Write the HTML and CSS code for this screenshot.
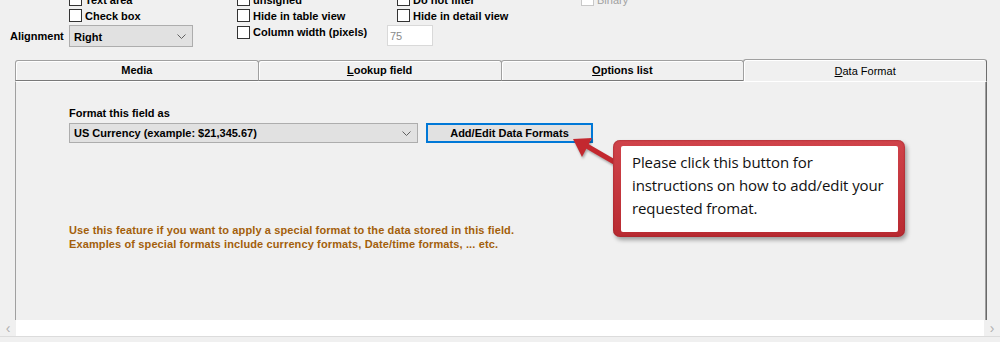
FILE: index.html
```html
<!DOCTYPE html>
<html lang="en">
<head>
    <meta charset="UTF-8">
    <title>Field properties - Data Format</title>
    <link rel="stylesheet" href="styles.css">
</head>
<body>
<div class="screen">

    <div class="props">
        <div></div>
        <label class="check"><span class="cb"></span>Text area</label>
        <label class="check"><span class="cb"></span>unsigned</label>
        <label class="check indent"><span class="cb"></span>Do not filter</label>
        <label class="check disabled"><span class="cb"></span>Binary</label>

        <div></div>
        <label class="check"><span class="cb"></span>Check box</label>
        <label class="check"><span class="cb"></span>Hide in table view</label>
        <label class="check indent"><span class="cb"></span>Hide in detail view</label>
        <div></div>

        <div class="prop-label">Alignment</div>
        <div class="select align-select">Right
            <svg class="chev" width="9" height="5" viewBox="0 0 9 5"><path d="M0.5 0.5 L4.5 4.5 L8.5 0.5" fill="none" stroke="#606060"/></svg>
        </div>
        <label class="check row3"><span class="cb"></span>Column width (pixels)</label>
        <div class="num-input">75</div>
        <div></div>
    </div>

    <div class="tabs">
        <div class="tab">Media</div>
        <div class="tab"><u>L</u>ookup field</div>
        <div class="tab"><u>O</u>ptions list</div>
        <div class="tab active"><u>D</u>ata Format</div>
    </div>

    <div class="panel">
        <div class="field-label">Format this field as</div>
        <div class="field-row">
            <div class="select format-select">US Currency (example: $21,345.67)
                <svg class="chev" width="9" height="5" viewBox="0 0 9 5"><path d="M0.5 0.5 L4.5 4.5 L8.5 0.5" fill="none" stroke="#606060"/></svg>
            </div>
            <button class="btn focused">Add/Edit Data Formats</button>
        </div>
        <p class="hint">
            Use this feature if you want to apply a special format to the data stored in this field.<br>
            Examples of special formats include currency formats, Date/time formats, ... etc.
        </p>

        <!-- annotation drawn over the dialog -->
        <svg class="arrow" width="64" height="46" viewBox="0 0 64 46">
            <path d="M58 35 L20 13" stroke="#c3282f" stroke-width="5" fill="none"/>
            <path d="M8 7 L27 6 L17 25 Z" fill="#c3282f"/>
        </svg>
        <div class="callout">
            <div class="callout-body">Please click this button for<br>instructions on how to add/edit your<br>requested fromat.</div>
        </div>
    </div>

    <div class="hscroll">
        <span class="arr">&#8249;</span>
        <div class="track"></div>
        <span class="arr">&#8250;</span>
    </div>
</div>
</body>
</html>
```

FILE: styles.css
```css
body {
    margin: 0;
    background: #f0f0f0;
    font-family: "Liberation Sans", Arial, sans-serif;
    font-size: 11px;
    color: #000;
}

.screen {
    width: 1000px;
    height: 342px;
    overflow: hidden;
}

/* top property checkboxes */
.props {
    display: grid;
    grid-template-columns: 59px 168px 150px 194px 1fr;
    grid-template-rows: 15px 17px 22px;
    margin: -8px 0 0 10px;
    font-weight: bold;
}

.check {
    display: flex;
    align-items: center;
    white-space: nowrap;
}

.check.indent {
    padding-left: 10px;
}

.check.row3 {
    align-self: start;
    height: 16px;
    margin-top: 0;
}

.cb {
    width: 11px;
    height: 11px;
    border: 1px solid #333;
    background: #fff;
    margin-right: 3px;
    flex: none;
}

.check.disabled {
    color: #a0a0a0;
    font-weight: normal;
}

.check.disabled .cb {
    border-color: #c8c8c8;
}

.prop-label {
    align-self: center;
    padding-top: 1px;
}

.select {
    position: relative;
    box-sizing: border-box;
    background: #e1e1e1;
    border: 1px solid #adadad;
    font-weight: bold;
    padding-left: 4px;
    display: flex;
    align-items: center;
    white-space: nowrap;
}

.chev {
    position: absolute;
    right: 6px;
    top: 50%;
    margin-top: -2px;
}

.align-select {
    width: 124px;
    height: 22px;
    margin-top: 1px;
    padding-top: 2px;
}

.num-input {
    box-sizing: border-box;
    width: 46px;
    height: 21px;
    margin-top: 1px;
    background: #fff;
    border: 1px solid #d9d9d9;
    color: #8a8a8a;
    font-weight: normal;
    padding: 4px 0 0 2px;
}

/* tab strip */
.tabs {
    display: flex;
    margin: 14px 13px 0 15px;
    height: 21px;
}

.tab {
    flex: 1;
    box-sizing: border-box;
    height: 21px;
    border: 1px solid #a0a0a0;
    border-bottom-color: #7a7a7a;
    border-radius: 3px 3px 0 0;
    box-shadow: inset 1px 1px 0 #fff;
    text-align: center;
    font-weight: bold;
    line-height: 19px;
}

.tab + .tab {
    margin-left: -1px;
}

.tab.active {
    position: relative;
    z-index: 1;
    height: 22px;
    margin-top: -1px;
    border-bottom: none;
    border-right-color: #6e6e6e;
    background: #f0f0f0;
    font-weight: normal;
    line-height: 22px;
}

/* tab page */
.panel {
    position: relative;
    box-sizing: border-box;
    height: 239px;
    margin: 0 13px 0 15px;
    border-top: 1px solid #fff;
    border-left: 1px solid #a0a0a0;
    border-right: 1px solid #696969;
    box-shadow: inset -1px 0 0 #a0a0a0;
    padding: 24px 0 0 53px;
}

.field-label {
    font-weight: bold;
    line-height: 14px;
}

.field-row {
    display: flex;
    margin-top: 3px;
}

.format-select {
    width: 349px;
    height: 20px;
}

.btn {
    box-sizing: border-box;
    width: 167px;
    height: 20px;
    margin-left: 8px;
    background: #e1e1e1;
    border: 1px solid #adadad;
    font-family: inherit;
    font-size: 11px;
    font-weight: bold;
    color: #000;
    padding: 0;
}

.btn.focused {
    border: 2px solid #0078d7;
}

.hint {
    margin: 80px 0 0;
    color: #a35f0b;
    font-weight: bold;
    line-height: 14px;
    letter-spacing: 0.12px;
}

.arrow {
    position: absolute;
    left: 549px;
    top: 50px;
    filter: drop-shadow(1px 2px 1px rgba(0, 0, 0, 0.3));
}

.callout {
    position: absolute;
    left: 597px;
    top: 58px;
    width: 292px;
    box-sizing: border-box;
    padding: 6px 7px 5px 8px;
    border-radius: 7px;
    background: linear-gradient(#d0434a, #b82a31);
    box-shadow: 2px 3px 4px rgba(0, 0, 0, 0.35), inset 0 0 2px #8e1c22;
}

.callout-body {
    background: #fff;
    border-radius: 2px;
    height: 86px;
    box-sizing: border-box;
    padding: 5px 4px 0 11px;
    font-family: "Open Sans", "Noto Sans", sans-serif;
    font-size: 15px;
    letter-spacing: -0.1px;
    line-height: 23px;
    color: #111;
    white-space: nowrap;
}

/* horizontal scrollbar */
.hscroll {
    display: flex;
    height: 16px;
    border-bottom: 1px solid #dcdcdc;
}

.hscroll .arr {
    width: 16px;
    text-align: center;
    color: #b0b0b0;
    font-size: 14px;
    line-height: 16px;
}

.hscroll .track {
    flex: 1;
    background: #fff;
}
```
